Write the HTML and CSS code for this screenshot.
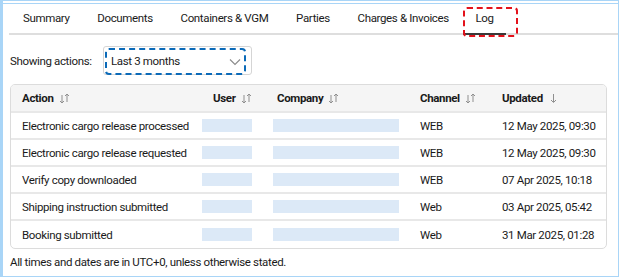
FILE: index.html
```html
<!DOCTYPE html>
<html>
<head>
<meta charset="utf-8">
<link rel="stylesheet" href="styles.css">
</head>
<body>
<div class="frame">
  <nav class="tabs">
    <div class="tab">Summary</div>
    <div class="tab">Documents</div>
    <div class="tab">Containers &amp; VGM</div>
    <div class="tab">Parties</div>
    <div class="tab">Charges &amp; Invoices</div>
    <div class="tab active">Log</div>
  </nav>
  <div class="filter">
    <span class="filter-label">Showing actions:</span>
    <div class="select">
      <span class="select-value">Last 3 months</span>
      <svg class="chev" width="12" height="8" viewBox="0 0 12 8"><path d="M1 1.5 L6 6.5 L11 1.5" fill="none" stroke="#8a8a8a" stroke-width="1.1"/></svg>
    </div>
  </div>
  <div class="table">
    <div class="row head">
      <div class="cell c1">Action <svg class="sort" width="11" height="11" viewBox="0 0 11 11"><path d="M3 2v8M1 8l2 2 2-2M8 9V1M6 3l2-2 2 2" fill="none" stroke="#8f8f8f" stroke-width="1"/></svg></div>
      <div class="cell c2">User <svg class="sort" width="11" height="11" viewBox="0 0 11 11"><path d="M3 2v8M1 8l2 2 2-2M8 9V1M6 3l2-2 2 2" fill="none" stroke="#8f8f8f" stroke-width="1"/></svg></div>
      <div class="cell c3">Company <svg class="sort" width="11" height="11" viewBox="0 0 11 11"><path d="M3 2v8M1 8l2 2 2-2M8 9V1M6 3l2-2 2 2" fill="none" stroke="#8f8f8f" stroke-width="1"/></svg></div>
      <div class="cell c4">Channel <svg class="sort" width="11" height="11" viewBox="0 0 11 11"><path d="M3 2v8M1 8l2 2 2-2M8 9V1M6 3l2-2 2 2" fill="none" stroke="#8f8f8f" stroke-width="1"/></svg></div>
      <div class="cell c5">Updated <svg class="sort down" width="11" height="11" viewBox="0 0 11 11"><path d="M5.5 1v8M3 7l2.5 2.5L8 7" fill="none" stroke="#8f8f8f" stroke-width="1"/></svg></div>
    </div>
    <div class="row">
      <div class="cell c1">Electronic cargo release processed</div>
      <div class="cell c2"><span class="bar user"></span></div>
      <div class="cell c3"><span class="bar company"></span></div>
      <div class="cell c4">WEB</div>
      <div class="cell c5">12 May 2025, 09:30</div>
    </div>
    <div class="row">
      <div class="cell c1">Electronic cargo release requested</div>
      <div class="cell c2"><span class="bar user"></span></div>
      <div class="cell c3"><span class="bar company"></span></div>
      <div class="cell c4">WEB</div>
      <div class="cell c5">12 May 2025, 09:30</div>
    </div>
    <div class="row">
      <div class="cell c1">Verify copy downloaded</div>
      <div class="cell c2"><span class="bar user"></span></div>
      <div class="cell c3"><span class="bar company"></span></div>
      <div class="cell c4">WEB</div>
      <div class="cell c5">07 Apr 2025, 10:18</div>
    </div>
    <div class="row">
      <div class="cell c1">Shipping instruction submitted</div>
      <div class="cell c2"><span class="bar user"></span></div>
      <div class="cell c3"><span class="bar company"></span></div>
      <div class="cell c4">Web</div>
      <div class="cell c5">03 Apr 2025, 05:42</div>
    </div>
    <div class="row last">
      <div class="cell c1">Booking submitted</div>
      <div class="cell c2"><span class="bar user"></span></div>
      <div class="cell c3"><span class="bar company"></span></div>
      <div class="cell c4">Web</div>
      <div class="cell c5">31 Mar 2025, 01:28</div>
    </div>
  </div>
  <p class="note">All times and dates are in UTC+0, unless otherwise stated.</p>
</div>
</body>
</html>
```

FILE: styles.css
```css
html, body {
  margin: 0;
  padding: 0;
  background: #ffffff;
}
body {
  font-family: "Liberation Sans Narrow", Roboto, "Noto Sans", sans-serif;
  font-size: 11.5px;
  letter-spacing: -0.35px;
  color: #1a1a1a;
}
.frame {
  box-sizing: border-box;
  width: 619px;
  height: 277px;
  border: 1px solid #a9d5f7;
  border-left: 3px solid #a9d5f7;
  border-top: none;
  position: relative;
  padding: 4px 10px 0 6px;
}
.frame::before {
  content: "";
  position: absolute;
  left: -3px;
  right: -1px;
  top: 0;
  height: 1px;
  background: #a9d5f7;
}
.frame::after {
  content: "";
  position: absolute;
  left: 0;
  right: 0;
  top: 3px;
  height: 1px;
  background: #a9d5f7;
}
.tabs {
  display: flex;
  border-bottom: 2px solid #dedede;
  height: 29px;
  margin-right: -10px;
}
.tab {
  padding: 0 13.7px 0 14px;
  line-height: 29px;
  font-size: 11.5px;
  position: relative;
}
.tab.active {
  box-shadow: inset 0 -2px 0 #3a3a3a;
  height: 31px;
  padding: 0 12px 0 13px;
}
.tab.active::after {
  content: "";
  position: absolute;
  left: 0;
  right: -12px;
  top: 3px;
  bottom: -2px;
  border: 2px dashed #e3121b;
  border-radius: 4px;
}
.filter {
  display: flex;
  align-items: center;
  margin-top: 11px;
  height: 29px;
  padding-left: 1px;
}
.filter-label {
  width: 93px;
}
.select {
  box-sizing: border-box;
  width: 149px;
  height: 29px;
  border: 1px solid #d5d5d5;
  border-radius: 3px;
  position: relative;
  display: flex;
  align-items: center;
  padding-left: 7px;
}
.select::after {
  content: "";
  position: absolute;
  left: 1px;
  top: 1px;
  width: 137px;
  height: 23px;
  border: 2px dashed #0b6ab8;
  border-radius: 4px;
}
.chev {
  position: absolute;
  right: 10px;
  top: 11px;
}
.table {
  margin-top: 9px;
  margin-left: 1px;
  width: 597px;
  border: 1px solid #dcdcdc;
  border-radius: 5px;
  overflow: hidden;
  box-sizing: border-box;
}
.row {
  display: grid;
  grid-template-columns: 191px 71px 147px 82px 1fr;
  height: 27px;
  align-items: center;
  border-bottom: 2px solid #e8e8e8;
  box-sizing: border-box;
}
.row.last {
  border-bottom: none;
}
.row.head {
  background: #f5f5f5;
  font-weight: 700;
  height: 28px;
}
.cell {
  white-space: nowrap;
  display: flex;
  align-items: center;
}
.c1 {
  padding-left: 11px;
}
.head .c2 {
  padding-left: 11px;
}
.head .c3 {
  padding-left: 4px;
}
.sort {
  margin-left: 5px;
}
.bar {
  display: block;
  height: 13px;
  background: #dce9f7;
}
.bar.user {
  width: 50px;
}
.bar.company {
  width: 126px;
}
.note {
  margin: 6px 0 0 1px;
}
```
